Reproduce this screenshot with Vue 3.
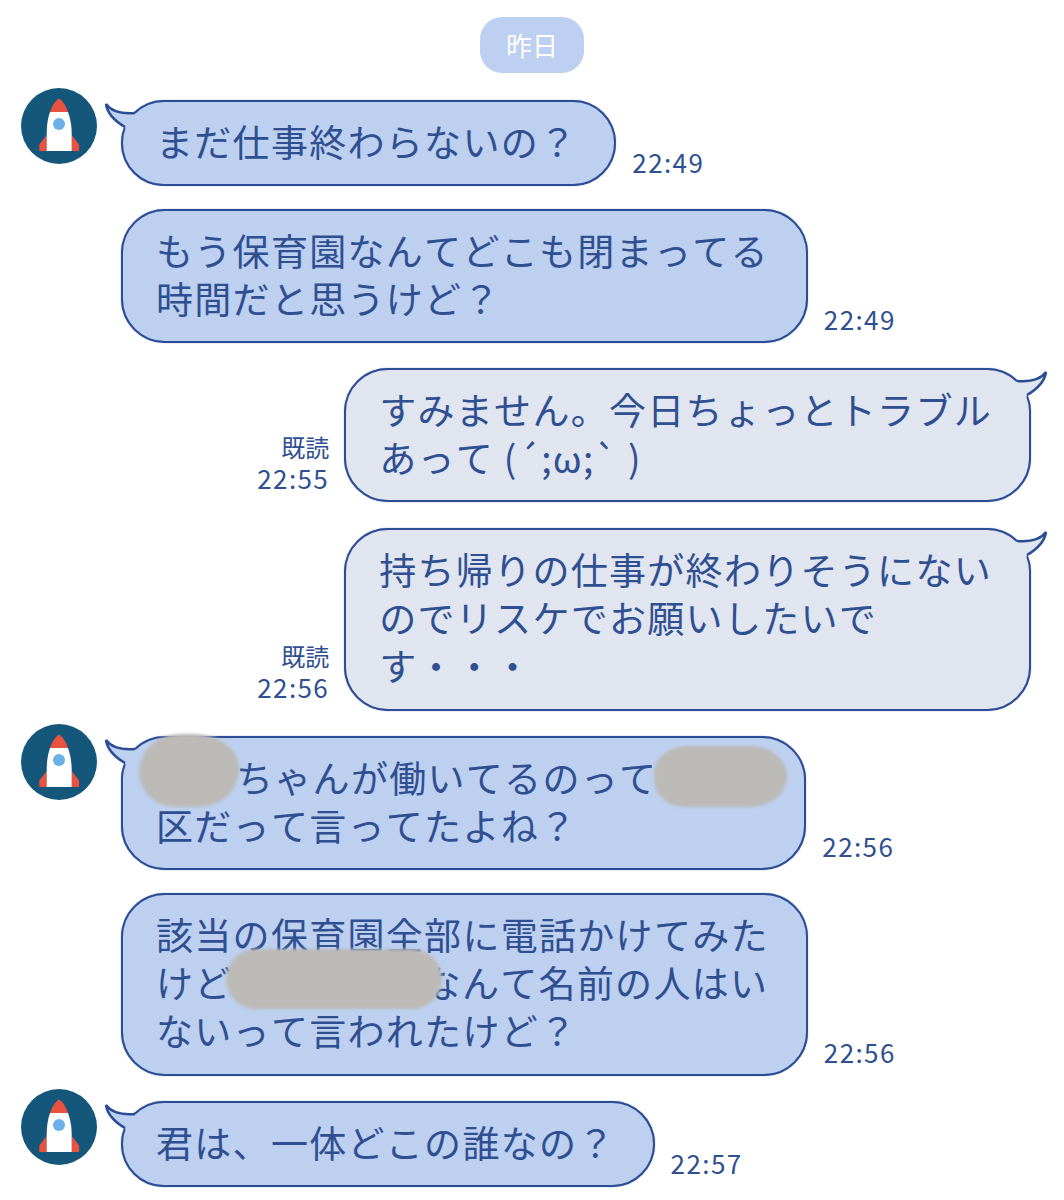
<template>
  <div class="chat">
    <div class="day"><span class="day-pill">昨日</span></div>

    <div
      v-for="m in messages"
      :key="m.id"
      class="row"
      :class="[m.mine ? 'mine' : 'theirs', { tight: m.tight }]"
    >
      <svg v-if="m.avatar" class="avatar" viewBox="0 0 76 76">
        <circle cx="38" cy="38" r="38" fill="#14577b" />
        <path d="M25.7 47 18.3 56.5V63h7.4zM50.7 47l7.4 9.5V63h-7.4z" fill="#e9523f" />
        <path d="M29 24C27 30 25.7 36 25.7 47V63H50.7V47C50.7 36 49 30 47 24Z" fill="#fff" />
        <path d="M29 24C31 18 34 13 38 10.5 42 13 45 18 47 24Z" fill="#e9523f" />
        <circle cx="38" cy="36" r="6" fill="#6cb0e8" />
      </svg>

      <div v-if="m.mine" class="meta">
        <div class="read">既読</div>
        <div class="time">{{ m.time }}</div>
      </div>

      <div class="bubble">
        <svg v-if="m.tail" class="tail" viewBox="0 0 40 44" width="40" height="44">
          <path class="tail-fill" d="M3 6C8 13 18 16 32 15L38 22 24 36 22 29C10 22 4 13 3 6Z" />
          <path class="tail-line" d="M32 15C18 16 8 13 3 6 4 13 10 22 22 29" />
        </svg>
        <div v-for="(line, i) in m.lines" :key="i" class="line">
          <template v-for="(part, j) in line" :key="j">
            <span v-if="part.mask" class="mask-slot" :class="part.mask"><i class="mask" /></span>
            <template v-else>{{ part }}</template>
          </template>
        </div>
      </div>

      <div v-if="!m.mine" class="time side">{{ m.time }}</div>
    </div>
  </div>
</template>

<script setup>
const messages = [
  { id: 1, avatar: true, tail: true, time: "22:49", lines: [["まだ仕事終わらないの？"]] },
  { id: 2, tight: true, time: "22:49", lines: [["もう保育園なんてどこも閉まってる"], ["時間だと思うけど？"]] },
  { id: 3, mine: true, tail: true, time: "22:55", lines: [["すみません。今日ちょっとトラブル"], ["あって (´;ω;` )"]] },
  { id: 4, mine: true, tail: true, time: "22:56", lines: [["持ち帰りの仕事が終わりそうにない"], ["のでリスケでお願いしたいで"], ["す・・・"]] },
  {
    id: 5,
    avatar: true,
    tail: true,
    time: "22:56",
    lines: [[{ mask: "m-a" }, "ちゃんが働いてるのって", { mask: "m-b" }], ["区だって言ってたよね？"]],
  },
  {
    id: 6,
    tight: true,
    time: "22:56",
    lines: [["該当の保育園全部に電話かけてみた"], ["けど", { mask: "m-c" }, "なんて名前の人はい"], ["ないって言われたけど？"]],
  },
  { id: 7, avatar: true, tail: true, time: "22:57", lines: [["君は、一体どこの誰なの？"]] },
];
</script>

<style>
html,
body {
  background: #fff;
}
</style>

<style scoped>
.chat {
  display: flex;
  flex-direction: column;
  height: 1200px;
  overflow: hidden;
  box-sizing: border-box;
  padding-top: 17px;
  font-family: "Noto Sans CJK JP", "Noto Sans", sans-serif;
  font-kerning: none;
  color: #2f4f91;
}
.day {
  display: flex;
  justify-content: center;
  margin-bottom: 27px;
}
.day-pill {
  width: 104px;
  height: 56px;
  border-radius: 22px;
  background: #bdd0f2;
  color: #fff;
  font-size: 26px;
  line-height: 56px;
  text-align: center;
}
.row {
  display: flex;
  align-items: flex-end;
  margin-bottom: 25px;
  padding-left: 121px;
}
.row.tight {
  margin-top: -2px;
}
.row.theirs {
  position: relative;
}
.row.mine {
  justify-content: flex-end;
  padding-right: 33px;
}
.row.mine + .row.mine {
  margin-top: 1px;
}
.avatar {
  position: absolute;
  left: 21px;
  top: -12px;
  width: 76px;
  height: 76px;
}
.bubble {
  position: relative;
  box-sizing: border-box;
  padding: 17px 37px 17px 33px;
  border: 2px solid #2c4d96;
  border-radius: 44px;
  box-shadow: 0 0 1px #2c4d96;
  background: #bdd0f0;
  font-size: 37px;
  line-height: 48px;
  letter-spacing: 1.3px;
  white-space: nowrap;
}
.mine .bubble {
  background: #e0e5f0;
}
.line {
  height: 48px;
  position: relative;
  top: -2px;
}
.line:nth-of-type(3) {
  height: 49px;
}
.tail {
  position: absolute;
  left: -20px;
  top: -4px;
  overflow: visible;
}
.mine .tail {
  left: auto;
  right: -20px;
  transform: scaleX(-1);
}
.tail-fill {
  fill: #bdd0f0;
}
.mine .tail-fill {
  fill: #e0e5f0;
}
.tail-line {
  fill: none;
  stroke: #2c4d96;
  stroke-width: 2.5;
}
.time {
  font-size: 26px;
  line-height: 31px;
  letter-spacing: 1.4px;
}
.time.side {
  margin: 0 0 9px 16px;
}
.meta {
  margin: 0 15px 9px 0;
  text-align: right;
}
.read {
  font-size: 24px;
  line-height: 31px;
}
.mask-slot {
  position: relative;
  display: inline-block;
  height: 48px;
  vertical-align: top;
}
.mask {
  position: absolute;
  background: #bbbab7;
  filter: blur(1.5px);
}
.m-a {
  width: 80px;
}
.m-a .mask {
  left: -17px;
  top: -19px;
  width: 100px;
  height: 73px;
  border-radius: 42px 46px 40px 36px / 38px 34px 38px 36px;
}
.m-b {
  width: 110px;
}
.m-b .mask {
  left: -3px;
  top: -7px;
  width: 133px;
  height: 61px;
  border-radius: 34px 36px 38px 30px / 26px 30px 30px 28px;
}
.m-c {
  width: 191px;
}
.m-c .mask {
  left: -7px;
  top: -9px;
  width: 216px;
  height: 60px;
  border-radius: 30px;
}
</style>
